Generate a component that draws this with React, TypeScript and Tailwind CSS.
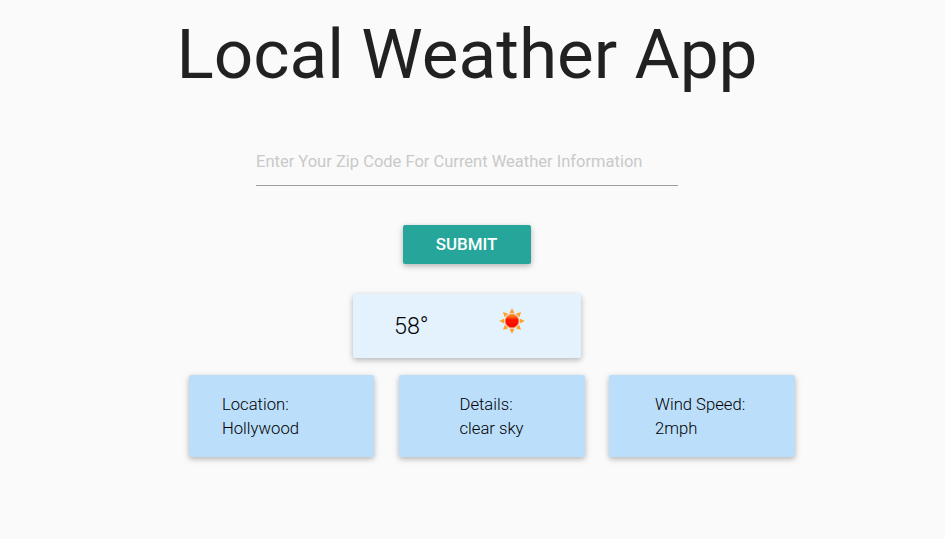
const shadow = "shadow-[0_2px_5px_0_rgba(0,0,0,0.2),0_2px_8px_0_rgba(0,0,0,0.1)]";

function Sun() {
  const rays = Array.from({ length: 8 }, (_, i) => i * 45);
  return (
    <svg className="block h-[26px] w-[26px]" viewBox="0 0 26 26">
      <defs>
        <linearGradient id="sun" x1="0" y1="0" x2="0" y2="1">
          <stop offset="0" stopColor="#ff9a2e" />
          <stop offset="0.2" stopColor="#ff6a1a" />
          <stop offset="0.4" stopColor="#ff1800" />
          <stop offset="1" stopColor="#fa0500" />
        </linearGradient>
      </defs>
      {rays.map((r) => (
        <path key={r} d="M13 .3 15.6 5.2H10.4Z" fill="#fba232" transform={`rotate(${r} 13 13)`} />
      ))}
      <circle cx="13" cy="13" r="6.8" fill="url(#sun)" stroke="#f78b3c" strokeWidth="0.8" />
    </svg>
  );
}

function Card({ title, value, className }: { title: string; value: string; className: string }) {
  return (
    <div className={`h-[82px] rounded-[2px] bg-[#bbdefb] pt-[18px] text-[16.65px] leading-6 font-light text-black ${shadow} ${className}`}>
      <div>{title}</div>
      <div>{value}</div>
    </div>
  );
}

export default function App() {
  return (
    <div className="h-[539px] w-[945px] overflow-hidden bg-[#fafafa] font-[Roboto,sans-serif] text-[rgba(0,0,0,0.87)]">
      <h1 className="ml-[176.5px] pt-[16px] text-[69.3px] leading-[78px] whitespace-nowrap">Local Weather App</h1>
      <form className="flex flex-col" onSubmit={(e) => e.preventDefault()}>
        <input
          className="mt-[43px] ml-[256px] h-[49px] w-[422px] border-b border-[#9e9e9e] bg-transparent text-[16.5px] outline-none placeholder:text-[#c9c9c9]"
          placeholder="Enter Your Zip Code For Current Weather Information"
        />
        <button className={`mt-[39px] ml-[403px] h-[39px] w-[128px] rounded-[2px] bg-[#26a69a] pr-[1px] text-[16.9px] font-medium text-white ${shadow}`}>
          SUBMIT
        </button>
      </form>
      <div className={`mt-[30px] ml-[353px] flex h-[64px] w-[228px] rounded-[2px] bg-[#e3f2fd] ${shadow}`}>
        <div className="w-[106px] pt-[16px] pl-[41px] text-[23.3px] leading-8 font-light text-black">58°</div>
        <div className="pt-[14px] pl-[40px]"><Sun /></div>
      </div>
      <div className="mt-[17px] ml-[189px] flex">
        <Card title="Location:" value="Hollywood" className="mr-[25px] w-[185px] pl-[33px]" />
        <Card title="Details:" value="clear sky" className="mr-6 w-[186px] pl-[60.5px]" />
        <Card title="Wind Speed:" value="2mph" className="w-[186px] pl-[46px]" />
      </div>
    </div>
  );
}
